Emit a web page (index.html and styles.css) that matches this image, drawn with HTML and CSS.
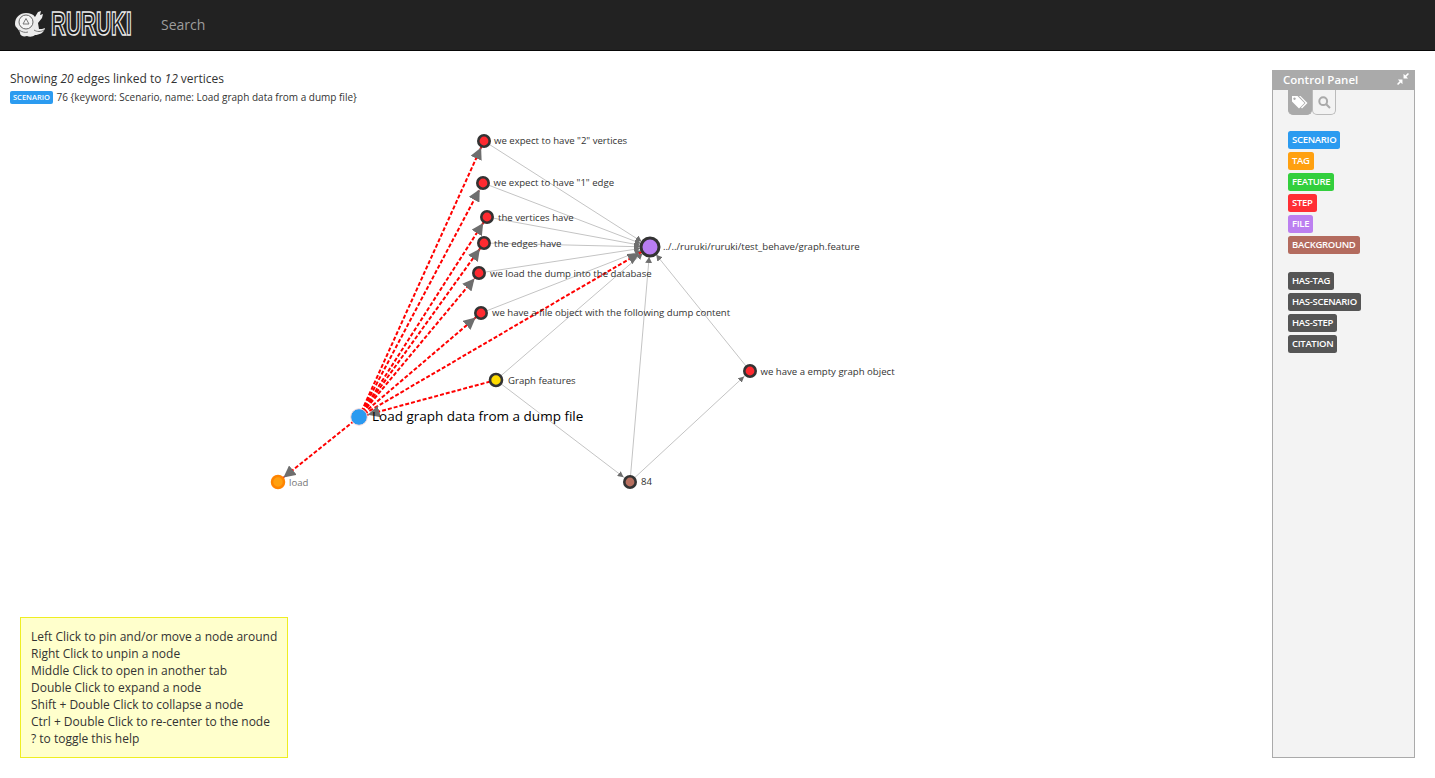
FILE: index.html
```html
<!DOCTYPE html>
<html lang="en">
<head>
<meta charset="utf-8">
<title>Ruruki</title>
<link rel="stylesheet" href="styles.css">
</head>
<body>
<nav class="navbar">
  <a class="brand" href="#">
    <svg class="brand-mark" width="119" height="44" viewBox="0 -7 119 44">
      <path class="snail-body" d="M1 14C1 7 6 3 12 3c4 0 7 1 9 4l3-5 3-1-1 4 3-1-1 4-4 5 1 6c2 0 4 0 6-1-1 5-6 7-10 7-2 2-6 2-8 1-3 1-7 0-7-3 0-2-2-3-3-5-1-1-2-2-2-4z"/>
      <circle class="snail-shell" cx="12" cy="12" r="7"/>
      <path class="snail-line" d="M12 8.500l3 5.500h-6zM20 20c3 2 7 2 10 0M5 20c3 2 6 3 9 2"/>
      <text class="brand-word" transform="translate(37 25) scale(.63 1)">RURUKI</text>
    </svg>
  </a>
  <a class="nav-link" href="#">Search</a>
</nav>
<main class="page">
  <section class="stage">
    <svg class="graph" width="1260" height="727" viewBox="0 51 1260 727">
      <defs>
        <marker id="arrow-red" markerUnits="userSpaceOnUse" markerWidth="24" markerHeight="12" viewBox="0 0 24 12" refX="19" refY="6" orient="auto"><path class="arrow" d="M0 0L12 6L0 12z"/></marker>
        <marker id="arrow-load" markerUnits="userSpaceOnUse" markerWidth="24" markerHeight="12" viewBox="0 0 24 12" refX="21" refY="6" orient="auto"><path class="arrow" d="M0 0L12 6L0 12z"/></marker>
        <marker id="arrow-file" markerUnits="userSpaceOnUse" markerWidth="30" markerHeight="12" viewBox="0 0 30 12" refX="24" refY="6" orient="auto"><path class="arrow" d="M0 0L12 6L0 12z"/></marker>
        <marker id="arrow-thin" markerUnits="userSpaceOnUse" markerWidth="24" markerHeight="6" viewBox="0 0 24 6" refX="14" refY="3" orient="auto"><path class="arrow" d="M0 0L6 3L0 6z"/></marker>
        <marker id="arrow-thin-file" markerUnits="userSpaceOnUse" markerWidth="24" markerHeight="7" viewBox="0 0 24 7" refX="16" refY="3.500" orient="auto"><path class="arrow" d="M0 0L6 3.500L0 7z"/></marker>
      </defs>
      <g class="edges">
        <line x1="484" y1="141" x2="650" y2="247" marker-end="url(#arrow-thin-file)"/>
        <line x1="483" y1="183" x2="650" y2="247" marker-end="url(#arrow-thin-file)"/>
        <line x1="487" y1="217" x2="650" y2="247" marker-end="url(#arrow-thin-file)"/>
        <line x1="484" y1="243" x2="650" y2="247" marker-end="url(#arrow-thin-file)"/>
        <line x1="479" y1="273" x2="650" y2="247" marker-end="url(#arrow-thin-file)"/>
        <line x1="481" y1="313" x2="650" y2="247" marker-end="url(#arrow-thin-file)"/>
        <line x1="496" y1="380" x2="650" y2="247" marker-end="url(#arrow-thin-file)"/>
        <line x1="630" y1="482" x2="650" y2="247" marker-end="url(#arrow-thin-file)"/>
        <line x1="750" y1="371" x2="650" y2="247" marker-end="url(#arrow-thin-file)"/>
        <line x1="496" y1="380" x2="630" y2="482" marker-end="url(#arrow-thin)"/>
        <line x1="630" y1="482" x2="750" y2="371" marker-end="url(#arrow-thin)"/>
      </g>
      <g class="edges-red">
        <line x1="359" y1="417" x2="484" y2="141" marker-end="url(#arrow-red)"/>
        <line x1="359" y1="417" x2="483" y2="183" marker-end="url(#arrow-red)"/>
        <line x1="359" y1="417" x2="487" y2="217" marker-end="url(#arrow-red)"/>
        <line x1="359" y1="417" x2="484" y2="243" marker-end="url(#arrow-red)"/>
        <line x1="359" y1="417" x2="479" y2="273" marker-end="url(#arrow-red)"/>
        <line x1="359" y1="417" x2="481" y2="313" marker-end="url(#arrow-red)"/>
        <line x1="359" y1="417" x2="650" y2="247" marker-end="url(#arrow-file)"/>
        <line x1="359" y1="417" x2="278" y2="482" marker-end="url(#arrow-red)"/>
        <line x1="496" y1="380" x2="359" y2="417" marker-end="url(#arrow-load)"/>
      </g>
      <circle class="node step" cx="484" cy="141" r="5.7"/>
      <circle class="node step" cx="483" cy="183" r="5.7"/>
      <circle class="node step" cx="487" cy="217" r="5.7"/>
      <circle class="node step" cx="484" cy="243" r="5.7"/>
      <circle class="node step" cx="479" cy="273" r="5.7"/>
      <circle class="node step" cx="481" cy="313" r="5.7"/>
      <circle class="node step" cx="750" cy="371" r="5.7"/>
      <circle class="node feature" cx="496" cy="380" r="6"/>
      <circle class="node background" cx="630" cy="482" r="5.7"/>
      <circle class="node file" cx="650" cy="247" r="9"/>
      <circle class="scenario" cx="359" cy="417" r="8.3"/>
      <circle class="tag" cx="278" cy="482" r="6"/>
      <g class="labels">
        <text x="494" y="144">we expect to have "2" vertices</text>
        <text x="493.500" y="186">we expect to have "1" edge</text>
        <text x="498" y="221">the vertices have</text>
        <text x="494" y="247">the edges have</text>
        <text x="490" y="277">we load the dump into the database</text>
        <text x="492" y="316">we have a file object with the following dump content</text>
        <text x="663" y="250">../../ruruki/ruruki/test_behave/graph.feature</text>
        <text x="760.500" y="375">we have a empty graph object</text>
        <text x="508" y="384">Graph features</text>
        <text x="641" y="485">84</text>
        <text class="label-muted" x="289" y="486">load</text>
      </g>
      <text class="label-focus" x="372" y="421">Load graph data from a dump file</text>
    </svg>
    <div class="summary">
      <p class="summary-line">Showing <em>20</em> edges linked to <em>12</em> vertices</p>
      <p class="summary-detail"><span class="badge-small">SCENARIO</span> 76 {keyword: Scenario, name: Load graph data from a dump file}</p>
    </div>
    <aside class="help">
      <p>Left Click to pin and/or move a node around</p>
      <p>Right Click to unpin a node</p>
      <p>Middle Click to open in another tab</p>
      <p>Double Click to expand a node</p>
      <p>Shift + Double Click to collapse a node</p>
      <p>Ctrl + Double Click to re-center to the node</p>
      <p>? to toggle this help</p>
    </aside>
  </section>
  <aside class="panel">
    <header class="panel-head">
      <span>Control Panel</span>
      <svg width="12" height="12" viewBox="0 0 11 11"><path class="icon-white" d="M11 1L8.600 3.400 10 4.800V5H6V1h.2l1.400 1.400L10 0zM0 10l2.400-2.400L1 6.200V6h4v4h-.2L3.400 8.600 1 11z"/></svg>
    </header>
    <div class="panel-body">
      <div class="tabs">
        <span class="tab tab-active">
          <svg width="18" height="15" viewBox="0 0 18 15"><path class="icon-white" d="M1 1h5.500l7 7-5.500 5.500-7-7zM3.500 2.500a1.200 1.200 0 1 0 .01 0z"/><path class="icon-white" d="M8 1h1.500l7 7-5.500 5.500-1-1 4.500-4.500z"/></svg>
        </span>
        <span class="tab">
          <svg width="13" height="13" viewBox="0 0 13 13"><circle class="icon-ring" cx="5.200" cy="5.200" r="3.900"/><path class="icon-ring" d="M8.200 8.200l3.800 3.800"/></svg>
        </span>
      </div>
      <ul class="legend">
        <li><span class="badge c-scenario">SCENARIO</span></li>
        <li><span class="badge c-tag">TAG</span></li>
        <li><span class="badge c-feature">FEATURE</span></li>
        <li><span class="badge c-step">STEP</span></li>
        <li><span class="badge c-file">FILE</span></li>
        <li><span class="badge c-background">BACKGROUND</span></li>
      </ul>
      <ul class="legend">
        <li><span class="badge c-edge">HAS-TAG</span></li>
        <li><span class="badge c-edge">HAS-SCENARIO</span></li>
        <li><span class="badge c-edge">HAS-STEP</span></li>
        <li><span class="badge c-edge">CITATION</span></li>
      </ul>
    </div>
  </aside>
</main>
</body>
</html>
```
FILE: styles.css
```css
* { box-sizing: border-box; }
html, body { height: 100%; }
body {
  margin: 0;
  overflow: hidden;
  background: #fff;
  color: #333;
  font-family: "Open Sans", sans-serif;
  font-size: 13px;
  display: flex;
  flex-direction: column;
}
p { margin: 0; }
ul { list-style: none; margin: 0; padding: 0; }

.navbar {
  flex: none;
  height: 51px;
  background: #222;
  border-bottom: 1px solid #080808;
  display: flex;
  align-items: center;
  padding-left: 14px;
}
.brand { display: block; height: 44px; margin-right: 28px; }
.brand-mark { display: block; }
.snail-body { fill: #ececec; }
.snail-shell { fill: #f6f6f6; stroke: #666; stroke-width: 1; }
.snail-line { fill: none; stroke: #777; stroke-width: 1; }
.brand-word {
  font-family: "Liberation Sans", sans-serif;
  font-weight: 700;
  font-size: 33px;
  fill: #1b1b1b;
  stroke: #ececec;
  stroke-width: 1.6px;
}
.nav-link {
  color: #9d9d9d;
  text-decoration: none;
  font-size: 14px;
  line-height: 19px;
  margin-top: -2px;
}

.page {
  flex: 1;
  min-height: 0;
  display: flex;
  padding: 19px 20px 20px 0;
}
.stage {
  position: relative;
  flex: 1;
  min-width: 0;
  display: flex;
  flex-direction: column;
  justify-content: space-between;
}
.graph { position: absolute; left: 0; top: -19px; }
.summary { position: relative; padding: 0 0 0 10px; }
.summary-line { font-size: 12px; line-height: 18px; }
.summary-detail { font-size: 10px; line-height: 14px; margin-top: 2px; display: flex; align-items: center; gap: 1px; white-space: pre; }
.badge-small {
  background: #2b9bf0;
  color: #fff;
  font-size: 7.500px;
  font-weight: 600;
  line-height: 13px;
  padding: 0 3px;
  border-radius: 2px;
}

.edges line { stroke: #c4c4c4; stroke-width: 1; }
.edges-red line { stroke: #f00; stroke-width: 2; stroke-dasharray: 4 2; }
.arrow { fill: #6e6e6e; }
.node { stroke: #333; stroke-width: 2.6; }
.step { fill: #ff2a30; }
.feature { fill: #ffdc00; }
.background { fill: #b76f5f; }
.file { fill: #b87df2; stroke-width: 3; }
.scenario { fill: #2a9af0; stroke: #fbdcdc; stroke-width: 1; }
.tag { fill: #ffa010; stroke: #ff8400; stroke-width: 2.5; }
.labels text { font-size: 9.600px; fill: #333; }
.labels .label-muted { fill: #777; }
.label-focus { font-size: 13.500px; fill: #000; }

.help {
  position: relative;
  width: 268px;
  margin-left: 20px;
  padding: 10px;
  background: #ffc;
  border: 1px solid #eeee22;
  font-size: 12px;
  line-height: 17px;
  white-space: nowrap;
}

.panel {
  flex: none;
  width: 143px;
  display: flex;
  flex-direction: column;
}
.panel-head {
  flex: none;
  height: 20px;
  background: #aaa;
  color: #fff;
  font-size: 11.500px;
  font-weight: 600;
  line-height: 20px;
  display: flex;
  justify-content: space-between;
  padding: 0 6px 0 11px;
}
.panel-head svg { margin-top: 3px; }
.panel-body {
  flex: 1;
  background: #f3f3f3;
  border: 1px solid #aaa;
  border-top: 0;
  padding: 0 15px;
}
.tabs { display: flex; }
.tab {
  width: 24px;
  height: 25px;
  display: flex;
  align-items: center;
  justify-content: center;
  border: 1px solid #bbb;
  border-top: 0;
  border-radius: 0 0 5px 5px;
}
.tab-active { background: #aaa; border-color: #aaa; }
.icon-white { fill: #fff; }
.icon-ring { fill: none; stroke: #aaa; stroke-width: 2; }
.legend { margin-top: 16px; display: flex; flex-direction: column; gap: 3px; align-items: flex-start; }
.legend + .legend { margin-top: 18px; }
.legend li { display: flex; height: 18px; }
.badge {
  color: #fff;
  font-size: 9.500px;
  font-weight: 600;
  letter-spacing: -0.3px;
  line-height: 18px;
  padding: 0 4px;
  border-radius: 2.500px;
}
.c-scenario { background: #2b9bf0; }
.c-tag { background: #ffa010; }
.c-feature { background: #33cf3d; }
.c-step { background: #ff2e34; }
.c-file { background: #bc7ff0; }
.c-background { background: #b36b5e; }
.c-edge { background: #555; }
```
